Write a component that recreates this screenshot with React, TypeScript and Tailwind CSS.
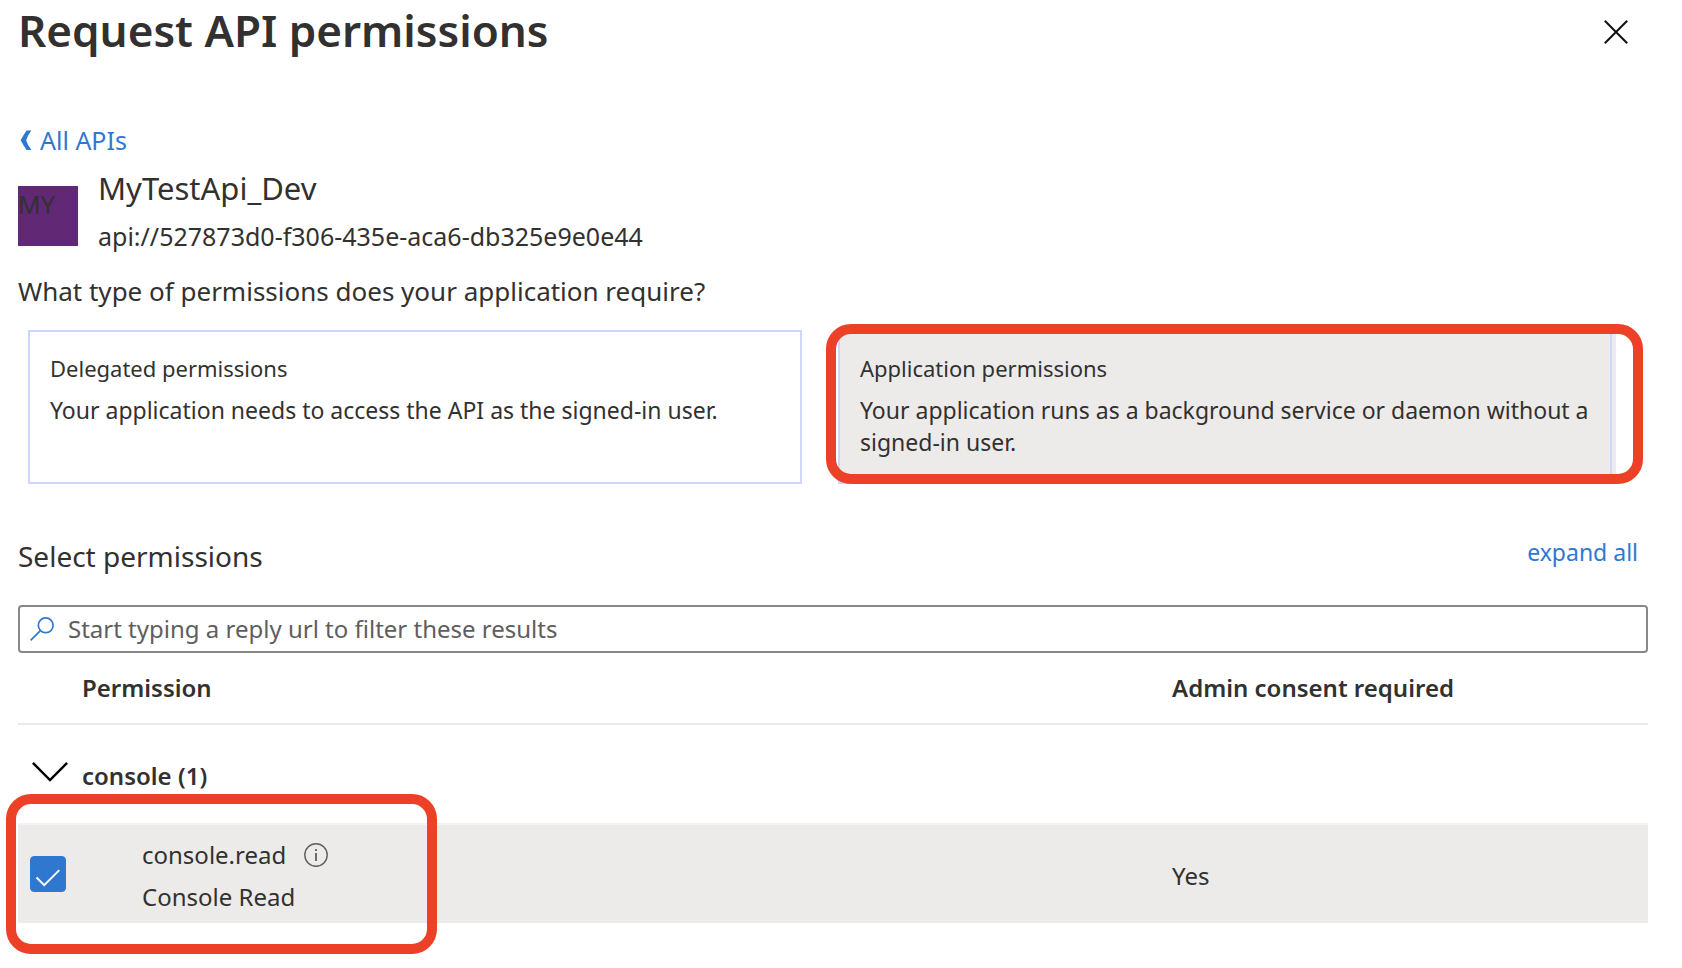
import { useState } from "react";

function CloseIcon() {
  return (
    <svg width="24" height="24" viewBox="0 0 24 24" fill="none" stroke="#111" strokeWidth="2" aria-hidden="true">
      <path d="M0.8 0.8 23.2 23.2M23.2 0.8 0.8 23.2" />
    </svg>
  );
}

function BackIcon() {
  return (
    <svg width="12" height="20" viewBox="0 0 12 20" fill="currentColor" aria-hidden="true">
      <path d="M6.6 0.6H11.4Q7.4 5.6 6.2 10.3 7.4 15 11.4 20H6.6Q3.2 15.2 0.6 10.3 3.2 5.4 6.6 0.6Z" />
    </svg>
  );
}

function SearchIcon() {
  return (
    <svg width="24" height="24" viewBox="0 0 24 24" fill="none" stroke="#2f78d0" strokeWidth="1.7" aria-hidden="true">
      <circle cx="15.7" cy="8.3" r="7.4" />
      <path d="M10.4 13.6 0.6 23.4" />
    </svg>
  );
}

function ChevronIcon() {
  return (
    <svg width="36" height="20" viewBox="0 0 36 20" fill="none" stroke="#000" strokeWidth="2.4" aria-hidden="true">
      <path d="M0.9 0.9 18 18 35.1 0.9" />
    </svg>
  );
}

function InfoIcon() {
  return (
    <svg width="24" height="24" viewBox="0 0 24 24" fill="none" stroke="#605e5c" strokeWidth="1.4" aria-hidden="true">
      <circle cx="12" cy="12" r="11.2" />
      <path d="M12 10v8M12 6v2" strokeWidth="1.8" />
    </svg>
  );
}

function Highlight({ className }: { className: string }) {
  return (
    <div
      aria-hidden="true"
      className={`pointer-events-none absolute rounded-[25px] border-10 border-[#ec4027] ${className}`}
    />
  );
}

export default function App() {
  const [kind, setKind] = useState("application");
  const [checked, setChecked] = useState(true);
  const [filter, setFilter] = useState("");

  return (
    <main className="min-h-screen bg-white pr-[34px] pl-[18px] font-['Noto_Sans',sans-serif] text-2xl text-[#323130]">
      <header className="flex h-16 items-start justify-between">
        <h1 className="text-[44px] leading-[60px] font-semibold">Request API permissions</h1>
        <button type="button" aria-label="Close" className="flex h-16 items-center pr-5">
          <CloseIcon />
        </button>
      </header>

      <a href="#apis" className="mt-[60px] flex w-fit items-center gap-2 pl-[2px] text-[25px] leading-8 text-[#2f78d0]">
        <BackIcon />
        All APIs
      </a>

      <section className="mt-3 flex gap-5">
        <div className="mt-[18px] size-[60px] bg-[#612876] text-[25px] leading-9">MY</div>
        <div className="leading-10">
          <h2 className="text-[31px]">MyTestApi_Dev</h2>
          <p className="mt-2 text-[25px]">api://527873d0-f306-435e-aca6-db325e9e0e44</p>
        </div>
      </section>

      <h3 className="mt-[15px] text-[26px] leading-10">What type of permissions does your application require?</h3>

      <div className="mt-[19px] mr-9 ml-[10px] grid grid-cols-2 gap-9 text-[23px] leading-8">
        <button
          type="button"
          aria-pressed={kind === "delegated"}
          onClick={() => setKind("delegated")}
          className="flex min-h-[154px] flex-col border-2 border-[#cdd7fb] px-5 py-5 text-left"
        >
          <span className="text-[22px]">Delegated permissions</span>
          <span className="mt-[10px]">Your application needs to access the API as the signed-in user.</span>
        </button>
        <div className="relative">
          <button
            type="button"
            aria-pressed={kind === "application"}
            onClick={() => setKind("application")}
            className="flex min-h-[154px] w-full flex-col border-2 border-[#cdd7fb] bg-[#ecebe9] px-5 py-5 text-left shadow-[4px_0_0_#ecebe9]"
          >
            <span className="text-[22px]">Application permissions</span>
            <span className="mt-[10px]">
              Your application runs as a background service or daemon without a signed-in user.
            </span>
          </button>
          <Highlight className="-top-[6px] -right-[31px] bottom-0 -left-3" />
        </div>
      </div>

      <div className="mt-[52px] flex items-start justify-between">
        <h3 className="text-[28px] leading-10">Select permissions</h3>
        <button type="button" className="pr-[10px] text-[23px] leading-8 text-[#2f78d0]">
          expand all
        </button>
      </div>

      <label className="mt-[29px] flex h-12 items-center gap-[14px] rounded-sm border-2 border-[#8a8886] px-[10px]">
        <SearchIcon />
        <input
          type="text"
          aria-label="Filter permissions"
          value={filter}
          onChange={(e) => setFilter(e.target.value)}
          placeholder="Start typing a reply url to filter these results"
          className="min-w-0 flex-1 outline-none placeholder:text-[#605e5c]"
        />
      </label>

      <div className="relative">
        <table className="w-full table-fixed border-separate border-spacing-0 text-left">
          <colgroup>
            <col className="w-16" />
            <col />
            <col className="w-[476px]" />
          </colgroup>
          <thead>
            <tr className="h-[72px] *:border-b-2 *:border-[#edebe9]">
              <th aria-label="Select" />
              <th className="font-semibold">Permission</th>
              <th className="font-semibold">Admin consent required</th>
            </tr>
          </thead>
          <tbody>
            <tr className="h-[98px]">
              <td className="pl-[14px]">
                <button type="button" aria-label="Collapse console" className="flex pb-1">
                  <ChevronIcon />
                </button>
              </td>
              <th scope="rowgroup" colSpan={2} className="pt-1 font-semibold">
                console (1)
              </th>
            </tr>
            <tr className="h-[100px] bg-[#ecebe9] *:border-t-2 *:border-[#f3f2f1]">
              <td className="pl-3">
                <span className="relative flex size-9">
                  <input
                    id="console-read"
                    type="checkbox"
                    checked={checked}
                    onChange={(e) => setChecked(e.target.checked)}
                    className="size-9 appearance-none rounded-sm border border-[#323130] bg-white checked:border-[#2f78d0] checked:bg-[#2f78d0]"
                  />
                  <svg
                    viewBox="0 0 36 36"
                    fill="none"
                    stroke="#fff"
                    strokeWidth="2"
                    aria-hidden="true"
                    className="pointer-events-none absolute inset-0 size-9"
                  >
                    <path d="M6.5 21.5 14.2 29.2 29.3 14.1" />
                  </svg>
                </span>
              </td>
              <td className="pt-1 pl-[60px] leading-[42px]">
                <div className="flex items-center gap-[18px]">
                  <label htmlFor="console-read">console.read</label>
                  <button type="button" aria-label="About console.read">
                    <InfoIcon />
                  </button>
                </div>
                <div>Console Read</div>
              </td>
              <td className="pt-1">Yes</td>
            </tr>
          </tbody>
        </table>
        <Highlight className="-bottom-[31px] -left-3 h-40 w-[431px]" />
      </div>
    </main>
  );
}
